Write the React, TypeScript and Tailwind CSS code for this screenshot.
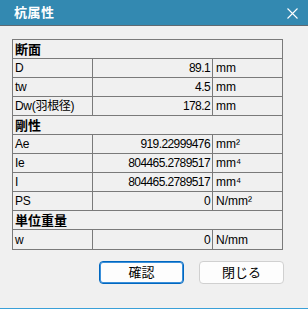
const font = { fontFamily: '"Liberation Sans", "Noto Sans CJK JP", sans-serif' };

type Row =
  | { kind: "head"; label: string }
  | { kind: "item"; label: string; value: string; unit: string };

const rows: Row[] = [
  { kind: "head", label: "断面" },
  { kind: "item", label: "D", value: "89.1", unit: "mm" },
  { kind: "item", label: "tw", value: "4.5", unit: "mm" },
  { kind: "item", label: "Dw(羽根径)", value: "178.2", unit: "mm" },
  { kind: "head", label: "剛性" },
  { kind: "item", label: "Ae", value: "919.22999476", unit: "mm²" },
  { kind: "item", label: "Ie", value: "804465.2789517", unit: "mm⁴" },
  { kind: "item", label: "I", value: "804465.2789517", unit: "mm⁴" },
  { kind: "item", label: "PS", value: "0", unit: "N/mm²" },
  { kind: "head", label: "単位重量" },
  { kind: "item", label: "w", value: "0", unit: "N/mm" },
];

const App = () => {
  return (
    <div
      className="w-[308px] h-[309px] flex flex-col bg-[#f0f0f0] border-b border-[#3aa0d8] text-black"
      style={font}
    >
      <div className="h-[26px] shrink-0 flex items-center justify-between bg-[#3389b1] border-b border-[#5f6a72] pl-[14px] pr-[10px]">
        <span className="text-white font-bold text-[13px] leading-none tracking-[0.5px]">杭属性</span>
        <svg width="11" height="11" viewBox="0 0 11 11" className="mt-[1px]">
          <path d="M0.5 0.5 L10.5 10.5 M10.5 0.5 L0.5 10.5" stroke="#fff" strokeWidth="1.1" />
        </svg>
      </div>

      <div className="pt-[13px] px-[12px]">
        <div className="w-[271px] border border-[#7a7a7a]">
          {rows.map((r, i) =>
            r.kind === "head" ? (
              <div
                key={i}
                className="h-[19px] flex items-center border-b border-[#7a7a7a] last:border-b-0 pl-[2px] text-[13px] font-bold leading-none"
              >
                {r.label}
              </div>
            ) : (
              <div
                key={i}
                className="h-[19px] flex border-b border-[#7a7a7a] last:border-b-0 text-[12px] leading-none"
              >
                <div className="w-[80px] flex items-center pl-[2px] border-r border-[#7a7a7a] tracking-[-0.3px]">
                  {r.label}
                </div>
                <div className="w-[120px] flex items-center justify-end pr-[2px] border-r border-[#7a7a7a] tracking-[-0.6px]">
                  {r.value}
                </div>
                <div className="flex-1 flex items-center pl-[3px]">{r.unit}</div>
              </div>
            )
          )}
        </div>
      </div>

      <div className="flex justify-end gap-[15px] pr-[24px] pt-[11px]">
        <button className="w-[85px] h-[23px] rounded-[4px] bg-[#fdfdfd] border border-[#0067c0] shadow-[inset_0_0_0_1px_#3b8fd9] text-[13px] leading-none">
          確認
        </button>
        <button className="w-[85px] h-[23px] rounded-[4px] bg-[#fdfdfd] border border-[#d0d0d0] text-[13px] leading-none">
          閉じる
        </button>
      </div>
    </div>
  );
};

export default App;
